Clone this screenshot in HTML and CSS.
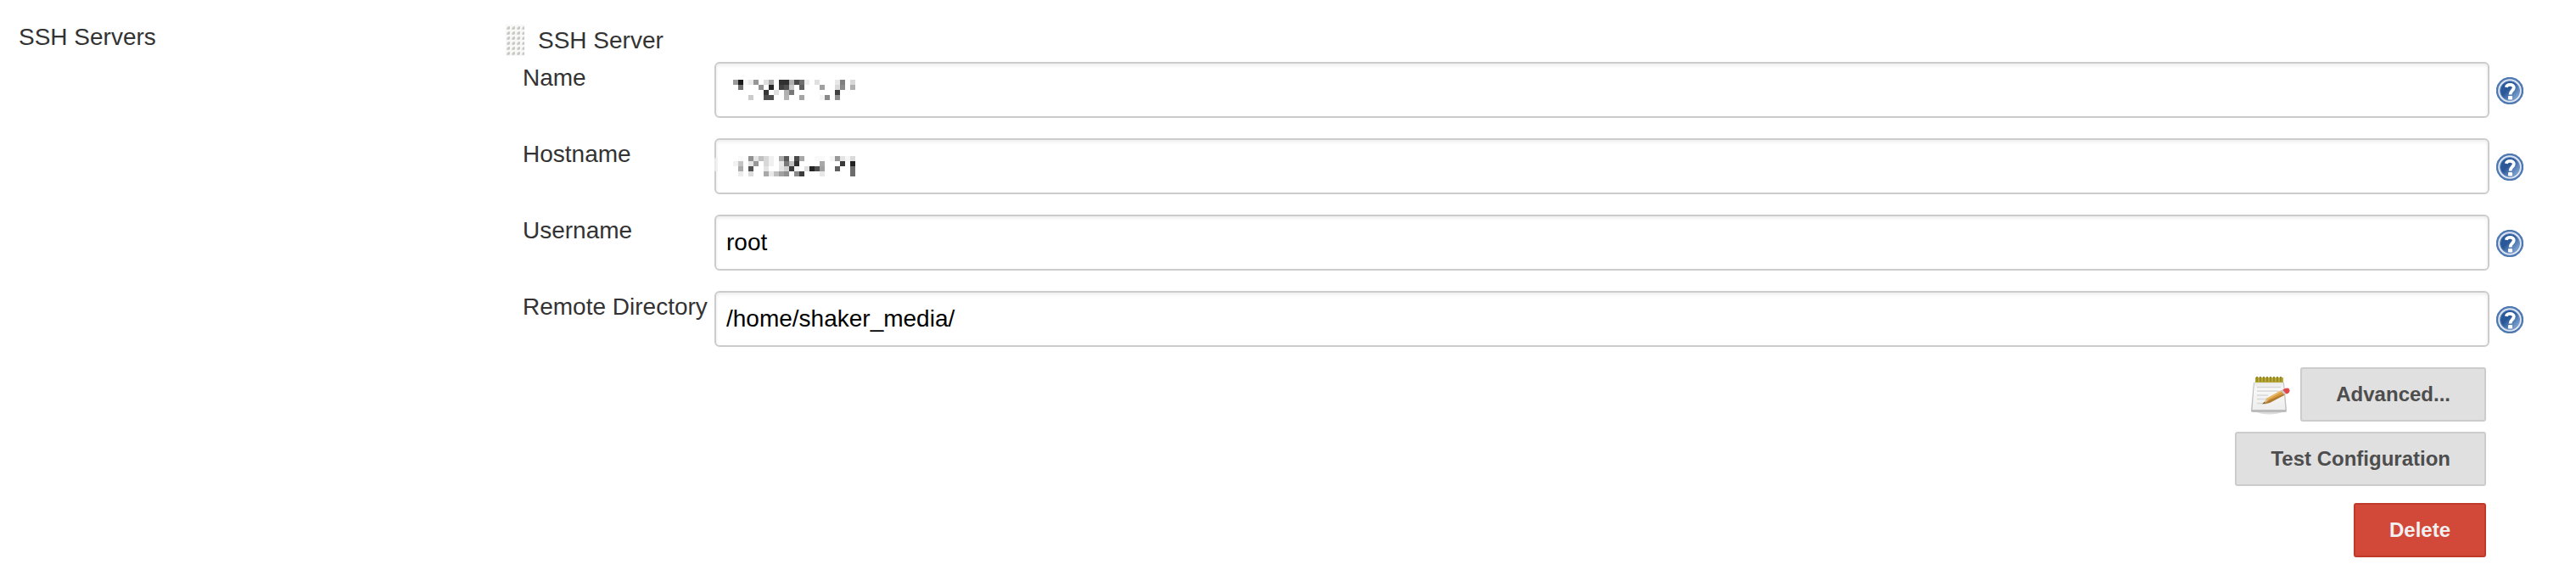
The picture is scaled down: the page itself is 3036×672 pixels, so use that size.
FILE: index.html
```html
<!DOCTYPE html>
<html lang="en">
<head>
<meta charset="utf-8">
<title>SSH Servers</title>
<link rel="stylesheet" href="styles.css">
</head>
<body>
<svg class="defs" aria-hidden="true">
  <defs>
    <linearGradient id="disc" x1="0.1" y1="0.1" x2="0.9" y2="0.9">
      <stop offset="0" stop-color="#2a5a9c"/>
      <stop offset="0.4" stop-color="#2a5797"/>
      <stop offset="1" stop-color="#86abd9"/>
    </linearGradient>
    <symbol id="help" viewBox="0 0 32 32">
      <circle cx="16" cy="16" r="15" fill="#dfe7f3" stroke="#5079b2" stroke-width="2.400"/>
      <circle cx="16" cy="16" r="11.500" fill="url(#disc)" stroke="#7394c4" stroke-width="1"/>
      <path d="M11.800 11.800C12.500 7.800 20.800 7.800 20.800 12.200C20.800 15.600 16.500 15.600 16.500 20.500" fill="none" stroke="#fff" stroke-width="3.800"/>
      <rect x="14" y="22" width="5" height="4.500" rx="1" fill="#fff"/>
    </symbol>
  </defs>
</svg>
<main class="config">
  <h2 class="section-title">SSH Servers</h2>
  <form class="server">
    <header class="server-head">
      <svg class="handle" viewBox="0 0 22 38" aria-hidden="true">
        <defs>
          <pattern id="grip" width="6" height="6" patternUnits="userSpaceOnUse">
            <rect width="6" height="6" fill="#f8f8f7"/>
            <path d="M1 6V4L3 2H5V5L4 6Z" fill="#dcdcda"/>
            <path d="M2 5.500V4L3.500 2.500H4.800V4.500L4 5.500Z" fill="#c6c6c3"/>
          </pattern>
        </defs>
        <rect width="22" height="37" fill="url(#grip)"/>
      </svg>
      <span>SSH Server</span>
    </header>

    <div class="row">
      <label for="name">Name</label>
      <div class="field">
        <input id="name" type="text">
        <svg class="mosaic" viewBox="0 0 24 4" aria-hidden="true">
          <rect x="0" fill="#9a9a9a"/><rect x="1" fill="#1a1a1a"/><rect x="2" fill="#f8f8f8"/><rect x="3" fill="#eaeaea"/><rect x="4" fill="#969696"/><rect x="6" fill="#dedede"/><rect x="7" fill="#a8a8a8"/><rect x="9" fill="#303030"/><rect x="10" fill="#303030"/><rect x="11" fill="#b0b0b0"/><rect x="12" fill="#4a4a4a"/><rect x="13" fill="#6e6e6e"/><rect x="14" fill="#eee"/><rect x="16" fill="#e0e0e0"/><rect x="20" fill="#e8e8e8"/><rect x="21" fill="#808080"/><rect x="23" fill="#d8d8d8"/>
          <rect x="1" y="1" fill="#707070"/><rect x="5" y="1" fill="#929292"/><rect x="7" y="1" fill="#282828"/><rect x="9" y="1" fill="#404040"/><rect x="10" y="1" fill="#505050"/><rect x="11" y="1" fill="#c8c8c8"/><rect x="13" y="1" fill="#606060"/><rect x="17" y="1" fill="#a0a0a0"/><rect x="20" y="1" fill="#dadada"/><rect x="21" y="1" fill="#8a8a8a"/><rect x="23" y="1" fill="#b0b0b0"/>
          <rect x="6" y="2" fill="#363636"/><rect x="8" y="2" fill="#e0e0e0"/><rect x="10" y="2" fill="#b0b0b0"/><rect x="11" y="2" fill="#787878"/><rect x="20" y="2" fill="#404040"/>
          <rect x="3" y="3" fill="#ccc"/><rect x="6" y="3" fill="#505050"/><rect x="7" y="3" fill="#505050"/><rect x="10" y="3" fill="#b4b4b4"/><rect x="13" y="3" fill="#a4a4a4"/><rect x="17" y="3" fill="#f4f4f4"/><rect x="18" y="3" fill="#8a8a8a"/><rect x="20" y="3" fill="#8c8c8c"/>
        </svg>
      </div>
      <button class="help" type="button" aria-label="Help for Name"><svg><use href="#help"/></svg></button>
    </div>

    <div class="row">
      <label for="hostname">Hostname</label>
      <div class="field smudged">
        <input id="hostname" type="text">
        <svg class="mosaic" viewBox="0 0 24 4" aria-hidden="true">
          <rect x="1" fill="#fafafa"/><rect x="3" fill="#909090"/><rect x="4" fill="#e4e4e4"/><rect x="5" fill="#c0c0c0"/><rect x="6" fill="#d8d8d8"/><rect x="7" fill="#f0f0f0"/><rect x="9" fill="#a8a8a8"/><rect x="10" fill="#585858"/><rect x="11" fill="#f4f4f4"/><rect x="12" fill="#4a4a4a"/><rect x="13" fill="#a8a8a8"/><rect x="16" fill="#fafafa"/><rect x="17" fill="#fafafa"/><rect x="19" fill="#f5f5f5"/><rect x="20" fill="#989898"/><rect x="21" fill="#e4e4e4"/><rect x="22" fill="#f6f6f6"/><rect x="23" fill="#dadada"/>
          <rect x="0" y="1" fill="#f2f2f2"/><rect x="1" y="1" fill="#c4c4c4"/><rect x="3" y="1" fill="#e4e4e4"/><rect x="4" y="1" fill="#989898"/><rect x="6" y="1" fill="#d8d8d8"/><rect x="7" y="1" fill="#f0f0f0"/><rect x="9" y="1" fill="#e8e8e8"/><rect x="10" y="1" fill="#787878"/><rect x="11" y="1" fill="#c0c0c0"/><rect x="12" y="1" fill="#303030"/><rect x="17" y="1" fill="#a8a8a8"/><rect x="21" y="1" fill="#3a3a3a"/><rect x="23" y="1" fill="#222"/>
          <rect x="1" y="2" fill="#acacac"/><rect x="3" y="2" fill="#505050"/><rect x="6" y="2" fill="#e4e4e4"/><rect x="9" y="2" fill="#e4e4e4"/><rect x="10" y="2" fill="#d0d0d0"/><rect x="11" y="2" fill="#3a3a3a"/><rect x="12" y="2" fill="#f2f2f2"/><rect x="14" y="2" fill="#e0e0e0"/><rect x="15" y="2" fill="#242424"/><rect x="16" y="2" fill="#505050"/><rect x="17" y="2" fill="#a0a0a0"/><rect x="20" y="2" fill="#606060"/><rect x="23" y="2" fill="#6c6c6c"/>
          <rect x="1" y="3" fill="#ececec"/><rect x="3" y="3" fill="#dcdcdc"/><rect x="6" y="3" fill="#a8a8a8"/><rect x="7" y="3" fill="#e8e8e8"/><rect x="8" y="3" fill="#c0c0c0"/><rect x="9" y="3" fill="#a0a0a0"/><rect x="10" y="3" fill="#909090"/><rect x="12" y="3" fill="#8a8a8a"/><rect x="13" y="3" fill="#3c3c3c"/><rect x="17" y="3" fill="#e8e8e8"/><rect x="23" y="3" fill="#6c6c6c"/>
        </svg>
      </div>
      <button class="help" type="button" aria-label="Help for Hostname"><svg><use href="#help"/></svg></button>
    </div>

    <div class="row">
      <label for="username">Username</label>
      <div class="field"><input id="username" type="text" value="root"></div>
      <button class="help" type="button" aria-label="Help for Username"><svg><use href="#help"/></svg></button>
    </div>

    <div class="row">
      <label for="directory">Remote Directory</label>
      <div class="field"><input id="directory" type="text" value="/home/shaker_media/" spellcheck="false"></div>
      <button class="help" type="button" aria-label="Help for Remote Directory"><svg><use href="#help"/></svg></button>
    </div>

    <div class="actions">
      <div class="advanced">
        <svg class="notepad" viewBox="0 0 48 48" aria-hidden="true">
          <defs>
            <linearGradient id="paper" x1="0" y1="0" x2="0" y2="1">
              <stop offset="0" stop-color="#e6e6e6"/>
              <stop offset="0.25" stop-color="#f8f8f8"/>
              <stop offset="1" stop-color="#eeeeee"/>
            </linearGradient>
          </defs>
          <path d="M6 44Q23 51 42 44Z" fill="#dcdcdc"/>
          <path d="M5 10H41L44 43Q44 45 42 45H4Q2 45 2 43Z" fill="#bcbcbc"/>
          <path d="M6 9H40L42.500 42H3.500Z" fill="url(#paper)"/>
          <path d="M9 15.500H37M9 20H35M9 25H22M9 29.500H25M9 34.500H17" stroke="#d8d8d8" stroke-width="1.500"/>
          <rect x="7" y="4" width="33" height="6" fill="#b7a83a"/>
          <path d="M9 3V9M13 3V9M17 3V9M21 3V9M25 3V9M29 3V9M33 3V9M37 3V9" stroke="#9b8c28" stroke-width="2"/>
          <path d="M16 35L21 28L25 32Z" fill="#dcc08e"/>
          <path d="M20 29L38 19L42 24L24 33Z" fill="#d99a3e"/>
          <path d="M21 32L41 23L42 24.500L24 34L17 35.500Z" fill="#b27a30"/>
          <path d="M20 29L38 19L39 20.500L21 30.500Z" fill="#e8ba68"/>
          <path d="M37 19.500L40 18L44 22.500L41 24.500Z" fill="#c9c5cb"/>
          <path d="M39.500 18.500Q44 15 47 17.500Q49 22 43.500 23.500Z" fill="#e0484a"/>
          <path d="M15 35.500L18 32.500L19 34.500Z" fill="#7a5c30"/>
        </svg>
        <button class="btn" type="button">Advanced...</button>
      </div>
      <button class="btn" type="button">Test Configuration</button>
      <button class="btn btn-danger" type="button">Delete</button>
    </div>
  </form>
</main>
</body>
</html>
```
FILE: styles.css
```css
* {
  box-sizing: border-box;
}

body {
  margin: 0;
  background: #fff;
  color: #333;
  font-family: "Liberation Sans", Arial, Helvetica, sans-serif;
  font-size: 28px;
  line-height: 38px;
}

.defs {
  display: block;
  width: 0;
  height: 0;
}

.config {
  display: grid;
  grid-template-columns: 574px minmax(0, 1fr);
  padding: 25px 62px 15px 22px;
}

.section-title {
  margin: 0;
  font-size: 28px;
  font-weight: 400;
}

.server {
  padding-top: 4px;
}

.server-head {
  display: flex;
  gap: 16px;
  height: 44px;
}

.handle {
  width: 22px;
  height: 38px;
}

.row {
  display: grid;
  grid-template-columns: 226px minmax(0, 1fr) 40px;
  align-items: start;
  margin-bottom: 24px;
  padding-left: 20px;
}

.row label {
  white-space: nowrap;
}

.field {
  position: relative;
}

.field input {
  display: block;
  width: 100%;
  height: 66px;
  padding: 0 12px;
  border: 2px solid #ccc;
  border-radius: 6px;
  background: #fff;
  box-shadow: inset 0 2px 4px rgba(0, 0, 0, 0.08);
  color: #000;
  font: inherit;
}

.smudged::before {
  content: "";
  position: absolute;
  top: 22px;
  left: 0;
  width: 4px;
  height: 18px;
  border-radius: 4px 0 0 4px;
  background: rgba(240, 240, 240, 0.8);
}

.mosaic {
  position: absolute;
  top: 21px;
  left: 22px;
  width: 144px;
  height: 24px;
  shape-rendering: crispEdges;
  pointer-events: none;
}

.mosaic rect {
  width: 1px;
  height: 1px;
}

.help {
  width: 32px;
  height: 32px;
  margin: 18px 0 0 8px;
  padding: 0;
  border: 0;
  background: none;
}

.help svg {
  display: block;
  width: 32px;
  height: 32px;
}

.actions {
  display: flex;
  flex-direction: column;
  align-items: flex-end;
  gap: 12px;
  padding-right: 44px;
}

.advanced {
  display: flex;
  align-items: center;
  gap: 12px;
}

.notepad {
  width: 48px;
  height: 48px;
}

.btn {
  height: 64px;
  padding: 0 40px;
  border: 2px solid #ccc;
  border-radius: 3px;
  background: #e0e0e0;
  color: #4d4d4d;
  font: inherit;
  font-size: 24px;
  font-weight: 700;
}

.btn-danger {
  margin-top: 8px;
  border-color: #c03a2b;
  background: #d24939;
  color: #f0f0f0;
}
```
